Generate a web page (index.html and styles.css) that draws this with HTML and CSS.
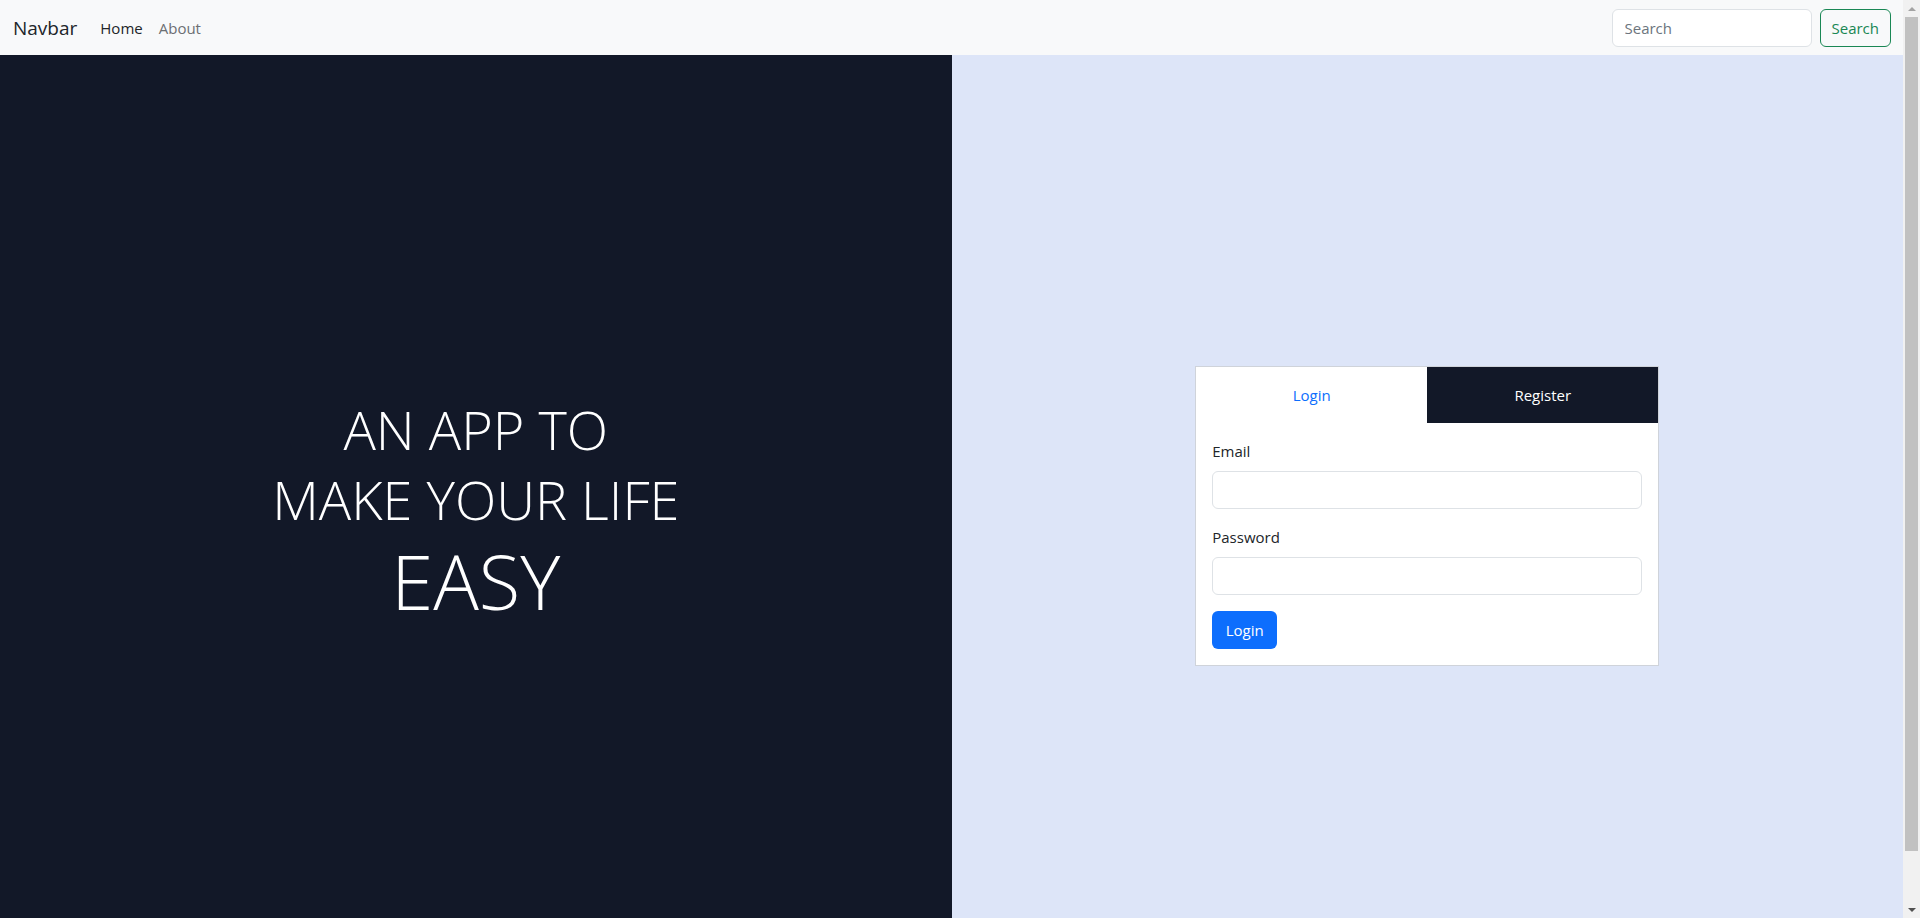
FILE: index.html
```html
<!DOCTYPE html>
<html lang="en">
<head>
<meta charset="utf-8">
<title>Navbar</title>
<link rel="stylesheet" href="styles.css">
</head>
<body>
<nav class="navbar">
  <div class="nav-left">
    <a class="brand" href="#">Navbar</a>
    <a class="nav-link active" href="#">Home</a>
    <a class="nav-link" href="#">About</a>
  </div>
  <form class="search-form">
    <input class="search-input" type="search" placeholder="Search">
    <button class="btn-search" type="button">Search</button>
  </form>
</nav>
<main class="split">
  <section class="hero">
    <h1 class="hero-title">AN APP TO<br>MAKE YOUR LIFE</h1>
    <h1 class="hero-big">EASY</h1>
  </section>
  <section class="auth">
    <div class="card">
      <div class="tabs">
        <button class="tab tab-active" type="button">Login</button>
        <button class="tab tab-dark" type="button">Register</button>
      </div>
      <form class="card-body">
        <label class="form-label" for="email">Email</label>
        <input class="form-control" id="email" type="email">
        <label class="form-label" for="pw">Password</label>
        <input class="form-control" id="pw" type="password">
        <button class="btn-login" type="button">Login</button>
      </form>
    </div>
  </section>
</main>
<div class="scrollbar" aria-hidden="true">
  <div class="sb-arrow"><span class="tri-up"></span></div>
  <div class="sb-track"><div class="sb-thumb"></div></div>
  <div class="sb-arrow"><span class="tri-down"></span></div>
</div>
</body>
</html>
```

FILE: styles.css
```css
* { box-sizing: border-box; }

body {
  margin: 0 17px 0 0;
  font-family: "Open Sans", "Noto Sans", sans-serif;
  font-size: 15px;
  color: #212529;
}

.navbar {
  display: flex;
  justify-content: space-between;
  align-items: center;
  padding: 8px 12px;
  height: 55px;
  background: #f8f9fa;
}

.nav-left {
  display: flex;
  align-items: center;
}

.brand {
  font-size: 19px;
  color: #212529;
  text-decoration: none;
  margin-right: 15px;
  padding: 4px 0 4px 1px;
}

.nav-link {
  padding: 8px 8px;
  color: #6c6f73;
  text-decoration: none;
}

.nav-link.active {
  color: #212529;
}

.search-form {
  display: flex;
  gap: 8px;
}

.search-input {
  width: 200px;
  height: 38px;
  padding: 6px 12px;
  font: inherit;
  border: 1px solid #dee2e6;
  border-radius: 6px;
  background: #fff;
}

.search-input::placeholder { color: #6c757d; }

.btn-search {
  height: 38px;
  padding: 6px 11px;
  font: inherit;
  color: #198754;
  background: transparent;
  border: 1px solid #198754;
  border-radius: 6px;
}

.split {
  display: grid;
  grid-template-columns: 1fr 1fr;
  height: 100vh;
}

.hero {
  background: #121828;
  color: #fff;
  display: flex;
  flex-direction: column;
  justify-content: center;
  align-items: center;
  text-align: center;
}

.hero-title {
  margin: 0 0 1px;
  font-size: 54px;
  font-weight: 300;
  line-height: 70px;
}

.hero-big {
  margin: 0 0 7px;
  font-size: 76px;
  font-weight: 300;
  line-height: 1.2;
}

.auth {
  background: #dde5f8;
  display: flex;
  justify-content: center;
  align-items: center;
}

.card {
  width: 464px;
  margin-top: 4px;
  background: #fff;
  border: 1px solid #cfd3da;
}

.tabs {
  display: grid;
  grid-template-columns: 1fr 1fr;
}

.tab {
  height: 56px;
  border: 0;
  font: inherit;
  background: #fff;
  color: #0d6efd;
}

.tab-dark {
  background: #121828;
  color: #fff;
}

.card-body {
  display: flex;
  flex-direction: column;
  align-items: flex-start;
  padding: 16px;
}

.form-label {
  line-height: 24px;
  margin-bottom: 8px;
}

.form-control {
  width: 100%;
  height: 38px;
  margin-bottom: 16px;
  padding: 6px 12px;
  font: inherit;
  border: 1px solid #dee2e6;
  border-radius: 6px;
}

.btn-login {
  height: 38px;
  width: 65px;
  font: inherit;
  color: #fff;
  background: #0d6efd;
  border: 0;
  border-radius: 6px;
}

/* decorative window scrollbar, drawn over the page edge */
.scrollbar {
  position: fixed;
  top: 0;
  right: 0;
  width: 17px;
  height: 100vh;
  background: #f1f1f1;
  display: flex;
  flex-direction: column;
}

.sb-arrow {
  height: 17px;
  display: flex;
  justify-content: center;
  align-items: center;
}

.tri-up {
  width: 0;
  height: 0;
  border-left: 4px solid transparent;
  border-right: 4px solid transparent;
  border-bottom: 4px solid #a3a3a3;
}

.tri-down {
  width: 0;
  height: 0;
  border-left: 4px solid transparent;
  border-right: 4px solid transparent;
  border-top: 4px solid #505050;
}

.sb-track {
  flex: 1;
  padding: 0 2px;
}

.sb-thumb {
  height: 834px;
  background: #c1c1c1;
}
```
